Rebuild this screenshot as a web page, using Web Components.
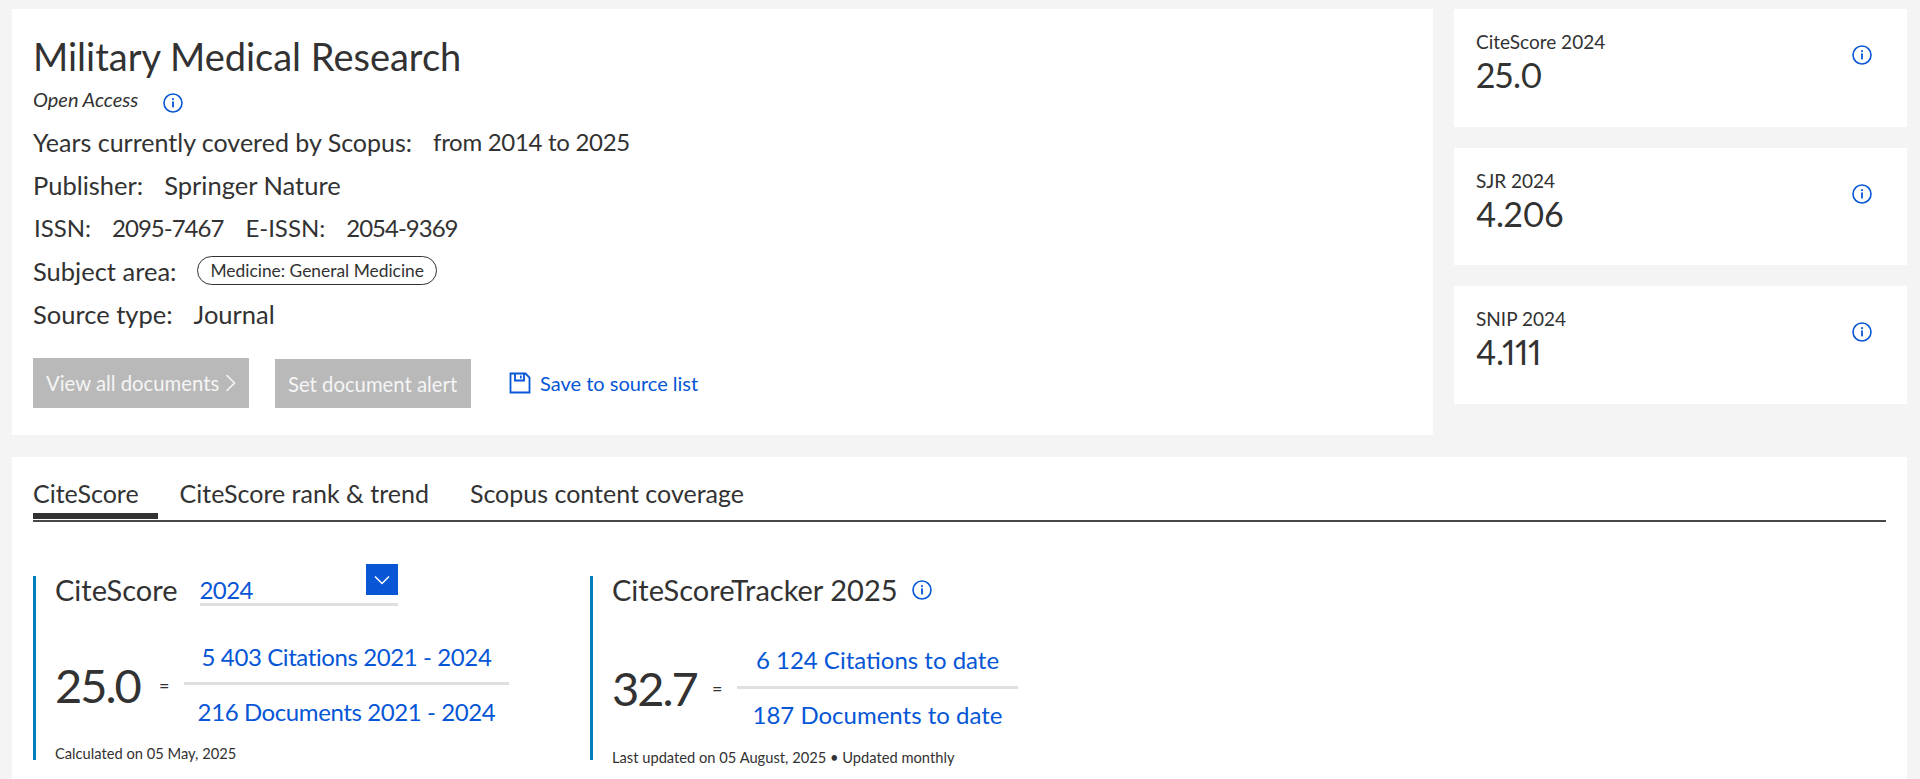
<!DOCTYPE html>
<html>
<head>
<meta charset="utf-8">
<style>
  html, body { margin: 0; background: #f4f4f4; height: 779px; overflow: hidden; }
  body { font-family: "Lato", "Noto Sans", sans-serif; color: #323232; }
  source-page { display: block; }
</style>
</head>
<body>
<source-page></source-page>
<script>
const INFO = `<svg viewBox="0 0 20 20" width="20" height="20" fill="none"><circle cx="10" cy="10" r="9" stroke="#0656d6" stroke-width="1.6"/><rect x="9.1" y="8.4" width="1.8" height="6" fill="#0656d6"/><rect x="9.1" y="5.2" width="1.8" height="1.9" fill="#0656d6"/></svg>`;

class InfoIcon extends HTMLElement {
  constructor() {
    super();
    this.attachShadow({ mode: 'open' }).innerHTML = `
    <style>
      :host { display: inline-flex; width: 20px; height: 20px; flex: none; }
      svg { width: 100%; height: 100%; }
    </style>${INFO}`;
  }
}
customElements.define('info-icon', InfoIcon);

class MetaRow extends HTMLElement {
  constructor() {
    super();
    this.attachShadow({ mode: 'open' }).innerHTML = `
    <style>
      :host { display: flex; align-items: center; gap: 21px; height: 43px; font-size: 25.5px; white-space: nowrap; }
    </style>
    <slot></slot>`;
  }
}
customElements.define('meta-row', MetaRow);

class GreyButton extends HTMLElement {
  constructor() {
    super();
    this.attachShadow({ mode: 'open' }).innerHTML = `
    <style>
      :host { display: flex; align-items: center; justify-content: space-between; height: 50px; padding: 0 13px; box-sizing: border-box;
        background: #b9b9b9; color: #f5f5f5; font-size: 20.3px; white-space: nowrap; }
    </style>
    <slot></slot>`;
  }
}
customElements.define('grey-button', GreyButton);

class SourceHeader extends HTMLElement {
  constructor() {
    super();
    this.attachShadow({ mode: 'open' }).innerHTML = `
    <style>
      :host { display: block; width: 1421px; height: 426px; box-sizing: border-box; padding: 25px 21px 0; background: #fff; }
      h1 { margin: 0; font-size: 38px; font-weight: 400; line-height: 44px; }
      .oa { display: flex; align-items: center; gap: 25px; height: 42px; font-size: 20px; font-style: italic; }
      .oa info-icon { margin-top: 8px; }
      .num { font-size: 24px; letter-spacing: -1px; }
      .years { font-size: 25px; }
      .range { font-size: 24px; letter-spacing: -.3px; }
      .tail { font-size: 24px; margin-left: 1px; }
      .pill { display: block; height: 29px; box-sizing: border-box; padding: 0 12px; border: 1px solid #323232; border-radius: 15px;
        font-size: 17.4px; line-height: 27px; }
      .actions { display: flex; align-items: flex-start; margin-top: 23px; }
      .docs { width: 216px; }
      .alert { width: 196px; height: 49px; margin: 1px 0 0 26px; }
      .save { display: flex; align-items: center; gap: 9px; height: 50px; margin-left: 38px; color: #0656d6; font-size: 20px; }
    </style>
    <h1>Military Medical Research</h1>
    <div class="oa"><span>Open Access</span><info-icon></info-icon></div>
    <meta-row><span class="years">Years currently covered by Scopus:</span><span class="range">from 2014 to 2025</span></meta-row>
    <meta-row><span>Publisher:</span><span>Springer Nature</span></meta-row>
    <meta-row><span class="tail">ISSN:</span><span class="num">2095-7467</span><span class="tail">E-ISSN:</span><span class="num">2054-9369</span></meta-row>
    <meta-row><span>Subject area:</span><span class="pill">Medicine: General Medicine</span></meta-row>
    <meta-row><span>Source type:</span><span>Journal</span></meta-row>
    <div class="actions">
      <grey-button class="docs"><span>View all documents</span>
        <svg width="11" height="18" viewBox="0 0 11 18" fill="none"><path d="M1.5 1l8 8-8 8" stroke="#f5f5f5" stroke-width="1.6"/></svg>
      </grey-button>
      <grey-button class="alert">Set document alert</grey-button>
      <div class="save">
        <svg width="22" height="22" viewBox="0 0 22 22" fill="none" stroke="#0656d6" stroke-width="1.8"><path d="M1.5 1.5h15l4 4v15h-19z"/><path d="M6 1.5v7h9v-7"/><rect x="11" y="3.5" width="1.6" height="3" fill="#0656d6" stroke="none"/></svg>
        <span>Save to source list</span>
      </div>
    </div>`;
  }
}
customElements.define('source-header', SourceHeader);

class MetricCard extends HTMLElement {
  constructor() {
    super();
    this.attachShadow({ mode: 'open' }).innerHTML = `
    <style>
      :host { display: flex; justify-content: space-between; height: 118px; box-sizing: border-box; padding: 22px 35px 0 22px; background: #fff; }
      .label { font-size: 19px; line-height: 22px; }
      .value { font-size: 34px; line-height: 44px; letter-spacing: -.4px; font-variant-numeric: proportional-nums; }
      info-icon { margin-top: 14px; }
    </style>
    <div><div class="label">${this.getAttribute('label')}</div><div class="value">${this.getAttribute('value')}</div></div>
    <info-icon></info-icon>`;
  }
}
customElements.define('metric-card', MetricCard);

class ScoreTabs extends HTMLElement {
  constructor() {
    super();
    this.attachShadow({ mode: 'open' }).innerHTML = `
    <style>
      :host { display: flex; gap: 41px; height: 65px; box-sizing: border-box; border-bottom: 2px solid #484848; font-size: 25px; }
      span { display: block; height: 63px; line-height: 73px; white-space: nowrap; }
      .on { position: relative; }
      .on::after { content: ""; position: absolute; left: 0; width: 125px; top: 56px; height: 6px; background: #323232; }
    </style>
    <span class="on">CiteScore</span><span>CiteScore rank &amp; trend</span><span>Scopus content coverage</span>`;
  }
}
customElements.define('score-tabs', ScoreTabs);

class ScoreBlock extends HTMLElement {
  constructor() {
    super();
    this.attachShadow({ mode: 'open' }).innerHTML = `
    <style>
      :host { display: block; box-sizing: border-box; height: 184px; border-left: 3px solid #007dbb; padding-left: 19px; }
      .head { display: flex; align-items: flex-start; height: 30px; font-size: 29px; line-height: 28px; white-space: nowrap; }
      .formula { display: flex; align-items: center; margin-top: var(--formula-top, 36px); }
      .score { width: var(--score-width, 86px); font-size: 47px; line-height: 60px; letter-spacing: -2px; }
      .eq { width: 10px; margin: 0 15px 0 18px; font-size: 18px; }
      .frac { display: flex; flex-direction: column; align-items: center; width: var(--frac-width, 325px); color: #0656d6; font-size: 24px; line-height: 30px; white-space: nowrap; letter-spacing: var(--frac-spacing, -.4px); }
      .frac i { align-self: stretch; height: 3px; margin: var(--line-top, 10px) 0 var(--line-bottom, 12px); background: #e0e0e0; }
      .note { margin-top: var(--note-top, 17px); font-size: 14.7px; line-height: 18px; white-space: nowrap; }
    </style>
    <div class="head"><slot name="head"></slot></div>
    <div class="formula">
      <span class="score">${this.getAttribute('score')}</span><span class="eq">=</span>
      <div class="frac"><span>${this.getAttribute('top')}</span><i></i><span>${this.getAttribute('bottom')}</span></div>
    </div>
    <div class="note">${this.getAttribute('note')}</div>`;
  }
}
customElements.define('score-block', ScoreBlock);

class YearSelect extends HTMLElement {
  constructor() {
    super();
    this.attachShadow({ mode: 'open' }).innerHTML = `
    <style>
      :host { display: block; position: relative; width: 198px; height: 27px; margin-left: 22px; border-bottom: 3px solid #e0e0e0; color: #0656d6; font-size: 24px; letter-spacing: -.6px; line-height: 28px; }
      .arrow { position: absolute; right: 0; top: -12px; width: 32px; height: 31px; background: #0656d6; display: flex; align-items: center; justify-content: center; }
    </style>
    2024
    <div class="arrow"><svg width="16" height="10" viewBox="0 0 16 10" fill="none"><path d="M1 1.5L8 8.5l7-7" stroke="#fff" stroke-width="1.5"/></svg></div>`;
  }
}
customElements.define('year-select', YearSelect);

class SourcePage extends HTMLElement {
  constructor() {
    super();
    this.attachShadow({ mode: 'open' }).innerHTML = `
    <style>
      :host { display: block; padding: 9px 13px 0 12px; }
      .top { display: flex; gap: 21px; }
      .side { display: flex; flex-direction: column; gap: 21px; flex: 1; }
      .side metric-card:nth-child(2) { height: 117px; }
      .panel { margin-top: 22px; height: 322px; box-sizing: border-box; padding: 0 21px; background: #fff; }
      .blocks { display: flex; margin-top: 54px; }
      .first { width: 557px; }
      .second { width: 500px; --formula-top: 39px; --frac-width: 281px; --score-width: 82px; --frac-spacing: 0; --line-top: 11px; --line-bottom: 11px; --note-top: 18px; }
      .head-gap { margin: 4px 0 0 14px; }
    </style>
    <div class="top">
      <source-header></source-header>
      <div class="side">
        <metric-card label="CiteScore 2024" value="25.0"></metric-card>
        <metric-card label="SJR 2024" value="4.206"></metric-card>
        <metric-card label="SNIP 2024" value="4.111"></metric-card>
      </div>
    </div>
    <div class="panel">
      <score-tabs></score-tabs>
      <div class="blocks">
        <score-block class="first" score="25.0" top="5 403 Citations 2021 - 2024" bottom="216 Documents 2021 - 2024" note="Calculated on 05 May, 2025">
          <span slot="head">CiteScore</span><year-select slot="head"></year-select>
        </score-block>
        <score-block class="second" score="32.7" top="6 124 Citations to date" bottom="187 Documents to date" note="Last updated on 05 August, 2025 • Updated monthly">
          <span slot="head">CiteScoreTracker 2025</span><info-icon slot="head" class="head-gap"></info-icon>
        </score-block>
      </div>
    </div>`;
  }
}
customElements.define('source-page', SourcePage);
</script>
</body>
</html>
